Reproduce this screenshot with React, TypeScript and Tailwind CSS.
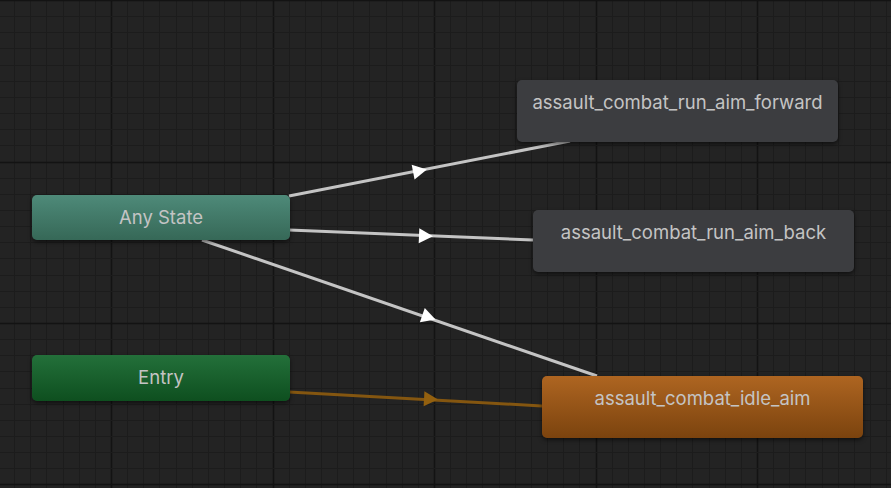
import React from "react";

type Node = {
  label: string;
  x: number;
  y: number;
  w: number;
  h: number;
  bg: string;
};

const nodes: Node[] = [
  { label: "Any State", x: 32, y: 195, w: 258, h: 45, bg: "bg-[linear-gradient(#4e8a79,#366857)]" },
  { label: "Entry", x: 32, y: 355, w: 258, h: 46, bg: "bg-[linear-gradient(#23703a,#0e4f1f)]" },
  { label: "assault_combat_run_aim_forward", x: 517, y: 80, w: 321, h: 62, bg: "bg-[#3c3d40]" },
  { label: "assault_combat_run_aim_back", x: 533, y: 210, w: 321, h: 62, bg: "bg-[#3c3d40]" },
  { label: "assault_combat_idle_aim", x: 542, y: 376, w: 321, h: 62, bg: "bg-[linear-gradient(#ae6521,#7b430e)]" },
];

const edges = [
  { x1: 289, y1: 196, x2: 570, y2: 141, ax: 419, ay: 171, color: "#c4c4c4", head: "#ffffff" },
  { x1: 289, y1: 230, x2: 533, y2: 240, ax: 425, ay: 236, color: "#c4c4c4", head: "#ffffff" },
  { x1: 202, y1: 240, x2: 597, y2: 376, ax: 428, ay: 317, color: "#c4c4c4", head: "#ffffff" },
  { x1: 289, y1: 392, x2: 542, y2: 406, ax: 430, ay: 399, color: "#845610", head: "#93600f" },
];

const Grid = () => {
  const lines: React.ReactNode[] = [];
  for (let k = -8; k < 50; k++) {
    const v = Math.round(111.5 + 16.15 * k - 0.5) + 0.5;
    if (v < 0 || v > 891) continue;
    const major = k % 10 === 0;
    lines.push(
      <line key={"v" + k} x1={v} y1={0} x2={v} y2={488} stroke={major ? "#131313" : "#1c1c1c"} strokeWidth={major ? 1.5 : 1} />
    );
  }
  for (let k = 0; k < 32; k++) {
    const h = Math.round(16.15 * k) + 0.5;
    if (h > 488) continue;
    const major = k % 10 === 0;
    lines.push(
      <line key={"h" + k} x1={0} y1={h} x2={891} y2={h} stroke={major ? "#131313" : "#1c1c1c"} strokeWidth={major ? 1.5 : 1} />
    );
  }
  return <>{lines}</>;
};

export default function App() {
  return (
    <div className="relative w-[891px] h-[488px] overflow-hidden bg-[#232323] font-['Inter',sans-serif]">
      <svg className="absolute inset-0" width={891} height={488}>
        <Grid />
        {edges.map((e, i) => {
          const ang = (Math.atan2(e.y2 - e.y1, e.x2 - e.x1) * 180) / Math.PI;
          return (
            <g key={i}>
              <line x1={e.x1} y1={e.y1} x2={e.x2} y2={e.y2} stroke={e.color} strokeWidth={3} />
              <polygon
                points="8,0 -6,-7.5 -6,7.5"
                fill={e.head}
                transform={`translate(${e.ax} ${e.ay}) rotate(${ang})`}
              />
            </g>
          );
        })}
      </svg>
      {nodes.map((n) => (
        <div
          key={n.label}
          className={`absolute rounded-[5px] ${n.bg} shadow-[0_2px_4px_rgba(0,0,0,0.55)]`}
          style={{ left: n.x, top: n.y, width: n.w, height: n.h }}
        >
          <div className="flex h-[45px] items-center justify-center text-[18.5px] text-[#c4c4c4]">
            {n.label}
          </div>
        </div>
      ))}
    </div>
  );
}
